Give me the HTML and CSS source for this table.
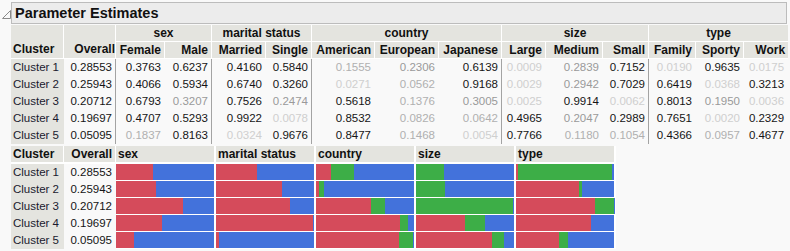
FILE: index.html
```html
<!DOCTYPE html>
<html>
<head>
<meta charset="utf-8">
<link rel="stylesheet" href="styles.css">
</head>
<body>
<div class="report">
  <div class="outline">
    <svg class="disc" width="9" height="9" viewBox="0 0 9 9"><polygon points="8.5,0.5 8.5,8.5 0.5,8.5" fill="none" stroke="#8a8a8a" stroke-width="1"/></svg>
    <div class="title">Parameter Estimates</div>
  </div>
  <div class="content">
    <table class="est">
      <colgroup>
        <col class="w53"><col class="w52"><col class="w49"><col class="w47"><col class="w54"><col class="w46"><col class="w63"><col class="w64"><col class="w63"><col class="w44"><col class="w57"><col class="w46"><col class="w47"><col class="w48"><col class="w44">
      </colgroup>
      <thead>
        <tr class="grp">
          <th rowspan="2" class="hlab">Cluster</th>
          <th rowspan="2" class="hnum">Overall</th>
          <th colspan="2">sex</th>
          <th colspan="2">marital status</th>
          <th colspan="3">country</th>
          <th colspan="3">size</th>
          <th colspan="3" class="last">type</th>
        </tr>
        <tr class="sub">
          <th>Female</th><th>Male</th><th>Married</th><th>Single</th><th>American</th><th>European</th><th>Japanese</th><th>Large</th><th>Medium</th><th>Small</th><th>Family</th><th>Sporty</th><th class="last">Work</th>
        </tr>
      </thead>
      <tbody>
        <tr><td class="lab">Cluster 1</td><td class="end">0.28553</td><td>0.3763</td><td class="end">0.6237</td><td>0.4160</td><td class="end">0.5840</td><td class="v1">0.1555</td><td class="v2">0.2306</td><td class="end">0.6139</td><td class="v0">0.0009</td><td class="v2">0.2839</td><td class="end">0.7152</td><td class="v0">0.0190</td><td>0.9635</td><td class="v0">0.0175</td></tr>
        <tr><td class="lab">Cluster 2</td><td class="end">0.25943</td><td>0.4066</td><td class="end">0.5934</td><td>0.6740</td><td class="end">0.3260</td><td class="v0">0.0271</td><td class="v1">0.0562</td><td class="end">0.9168</td><td class="v0">0.0029</td><td class="v2">0.2942</td><td class="end">0.7029</td><td>0.6419</td><td class="v0">0.0368</td><td>0.3213</td></tr>
        <tr><td class="lab">Cluster 3</td><td class="end">0.20712</td><td>0.6793</td><td class="end v2">0.3207</td><td>0.7526</td><td class="end v2">0.2474</td><td>0.5618</td><td class="v1">0.1376</td><td class="end v2">0.3005</td><td class="v0">0.0025</td><td>0.9914</td><td class="end v0">0.0062</td><td>0.8013</td><td class="v2">0.1950</td><td class="v0">0.0036</td></tr>
        <tr><td class="lab">Cluster 4</td><td class="end">0.19697</td><td>0.4707</td><td class="end">0.5293</td><td>0.9922</td><td class="end v0">0.0078</td><td>0.8532</td><td class="v1">0.0826</td><td class="end v1">0.0642</td><td>0.4965</td><td class="v2">0.2047</td><td class="end">0.2989</td><td>0.7651</td><td class="v0">0.0020</td><td>0.2329</td></tr>
        <tr><td class="lab">Cluster 5</td><td class="end">0.05095</td><td class="v1">0.1837</td><td class="end">0.8163</td><td class="v0">0.0324</td><td class="end">0.9676</td><td>0.8477</td><td class="v1">0.1468</td><td class="end v0">0.0054</td><td>0.7766</td><td class="v1">0.1180</td><td class="end v1">0.1054</td><td>0.4366</td><td class="v1">0.0957</td><td>0.4677</td></tr>
      </tbody>
    </table>

    <table class="bars">
      <colgroup>
        <col class="w53"><col class="w52"><col class="w100"><col class="w100"><col class="w100"><col class="w100"><col class="w100">
      </colgroup>
      <thead>
        <tr>
          <th class="hlab">Cluster</th><th class="hnum">Overall</th><th>sex</th><th>marital status</th><th>country</th><th>size</th><th>type</th>
        </tr>
      </thead>
      <tbody>
        <tr><td class="lab">Cluster 1</td><td class="num">0.28553</td>
          <td class="cell"><div class="bar"><span class="r" style="width:37.63%"></span><span class="b" style="width:62.37%"></span></div></td>
          <td class="cell"><div class="bar"><span class="r" style="width:41.60%"></span><span class="b" style="width:58.40%"></span></div></td>
          <td class="cell"><div class="bar"><span class="r" style="width:15.55%"></span><span class="g" style="width:23.06%"></span><span class="b" style="width:61.39%"></span></div></td>
          <td class="cell"><div class="bar"><span class="r" style="width:0.09%"></span><span class="g" style="width:28.39%"></span><span class="b" style="width:71.52%"></span></div></td>
          <td class="cell"><div class="bar"><span class="r" style="width:1.90%"></span><span class="g" style="width:96.35%"></span><span class="b" style="width:1.75%"></span></div></td>
        </tr>
        <tr><td class="lab">Cluster 2</td><td class="num">0.25943</td>
          <td class="cell"><div class="bar"><span class="r" style="width:40.66%"></span><span class="b" style="width:59.34%"></span></div></td>
          <td class="cell"><div class="bar"><span class="r" style="width:67.40%"></span><span class="b" style="width:32.60%"></span></div></td>
          <td class="cell"><div class="bar"><span class="r" style="width:2.71%"></span><span class="g" style="width:5.62%"></span><span class="b" style="width:91.68%"></span></div></td>
          <td class="cell"><div class="bar"><span class="r" style="width:0.29%"></span><span class="g" style="width:29.42%"></span><span class="b" style="width:70.29%"></span></div></td>
          <td class="cell"><div class="bar"><span class="r" style="width:64.19%"></span><span class="g" style="width:3.68%"></span><span class="b" style="width:32.13%"></span></div></td>
        </tr>
        <tr><td class="lab">Cluster 3</td><td class="num">0.20712</td>
          <td class="cell"><div class="bar"><span class="r" style="width:67.93%"></span><span class="b" style="width:32.07%"></span></div></td>
          <td class="cell"><div class="bar"><span class="r" style="width:75.26%"></span><span class="b" style="width:24.74%"></span></div></td>
          <td class="cell"><div class="bar"><span class="r" style="width:56.18%"></span><span class="g" style="width:13.76%"></span><span class="b" style="width:30.05%"></span></div></td>
          <td class="cell"><div class="bar"><span class="r" style="width:0.25%"></span><span class="g" style="width:99.14%"></span><span class="b" style="width:0.62%"></span></div></td>
          <td class="cell"><div class="bar"><span class="r" style="width:80.13%"></span><span class="g" style="width:19.50%"></span><span class="b" style="width:0.36%"></span></div></td>
        </tr>
        <tr><td class="lab">Cluster 4</td><td class="num">0.19697</td>
          <td class="cell"><div class="bar"><span class="r" style="width:47.07%"></span><span class="b" style="width:52.93%"></span></div></td>
          <td class="cell"><div class="bar"><span class="r" style="width:99.22%"></span><span class="b" style="width:0.78%"></span></div></td>
          <td class="cell"><div class="bar"><span class="r" style="width:85.32%"></span><span class="g" style="width:8.26%"></span><span class="b" style="width:6.42%"></span></div></td>
          <td class="cell"><div class="bar"><span class="r" style="width:49.65%"></span><span class="g" style="width:20.47%"></span><span class="b" style="width:29.89%"></span></div></td>
          <td class="cell"><div class="bar"><span class="r" style="width:76.51%"></span><span class="g" style="width:0.20%"></span><span class="b" style="width:23.29%"></span></div></td>
        </tr>
        <tr><td class="lab">Cluster 5</td><td class="num">0.05095</td>
          <td class="cell"><div class="bar"><span class="r" style="width:18.37%"></span><span class="b" style="width:81.63%"></span></div></td>
          <td class="cell"><div class="bar"><span class="r" style="width:3.24%"></span><span class="b" style="width:96.76%"></span></div></td>
          <td class="cell"><div class="bar"><span class="r" style="width:84.77%"></span><span class="g" style="width:14.68%"></span><span class="b" style="width:0.54%"></span></div></td>
          <td class="cell"><div class="bar"><span class="r" style="width:77.66%"></span><span class="g" style="width:11.80%"></span><span class="b" style="width:10.54%"></span></div></td>
          <td class="cell"><div class="bar"><span class="r" style="width:43.66%"></span><span class="g" style="width:9.57%"></span><span class="b" style="width:46.77%"></span></div></td>
        </tr>
      </tbody>
    </table>
  </div>
</div>
</body>
</html>
```

FILE: styles.css
```css
html, body {
  margin: 0;
  padding: 0;
  background: #f9f9f9;
}
body {
  font-family: "Liberation Sans", Arial, sans-serif;
  color: #151515;
}
.report {
  padding: 2px 0 0 2px;
}
.outline {
  display: flex;
  align-items: flex-start;
}
.disc {
  display: block;
  margin-top: 8px;
}
.title {
  box-sizing: border-box;
  width: 776px;
  height: 22px;
  border: 1px solid #bcbcbc;
  background: #ececec;
  font-weight: bold;
  font-size: 14.5px;
  line-height: 20px;
  padding-left: 3px;
  color: #111;
}
.content {
  margin-left: 9px;
  margin-top: 1px;
}
table {
  border-collapse: separate;
  border-spacing: 0;
  table-layout: fixed;
}
.est { width: 777px; }
.bars { width: 605px; margin-top: 2px; }

.w53 { width: 53px; }
.w52 { width: 52px; }
.w49 { width: 49px; }
.w47 { width: 47px; }
.w54 { width: 54px; }
.w46 { width: 46px; }
.w63 { width: 63px; }
.w64 { width: 64px; }
.w44 { width: 44px; }
.w57 { width: 57px; }
.w48 { width: 48px; }
.w100 { width: 100px; }

th {
  background: #e4e4df;
  font-weight: bold;
  font-size: 12px;
  height: 16px;
  line-height: 16px;
  padding: 0 3px 0 0;
  border-right: 1px solid #fff;
  border-bottom: 1px solid #fff;
  white-space: nowrap;
  overflow: hidden;
  color: #111;
}
.est .grp th { text-align: center; padding: 0; }
.est .sub th { text-align: right; }
.est th.hlab { text-align: left; vertical-align: bottom; padding-left: 2px; padding-bottom: 1px; }
.est th.hnum { text-align: right; vertical-align: bottom; padding-bottom: 1px; }
.est th.last { border-right: 0; }

td {
  font-size: 11.5px;
  height: 17px;
  line-height: 17px;
  padding: 0 3px 0 0;
  text-align: right;
  white-space: nowrap;
  border-right: 1px solid transparent;
}
td.lab {
  background: #e4e4df;
  text-align: left;
  padding-left: 2px;
  color: #1a1a2e;
}
td.end { border-right: 1px solid #a3a3a3; }
td.v0 { color: #cfcfcf; }
td.v1 { color: #b0b0b0; }
td.v2 { color: #9a9a9a; }

.bars th {
  text-align: left;
  padding-left: 2px;
  border-bottom: 2px solid #fff;
}
.bars th.hnum { text-align: right; padding-left: 0; }
.bars th:nth-child(n+3) { border-right: 2px solid #fff; padding-left: 2px; }
.bars td { height: 16px; line-height: 16px; border-bottom: 1px solid transparent; }
.bars td.lab { border-bottom-color: #e4e4df; }
.bars td.cell {
  padding: 0;
  border-right: 2px solid #fff;
  border-bottom: 1px solid #fff;
  background: #fff;
}
.bar {
  display: flex;
  height: 16px;
}
.bar span { display: block; height: 16px; }
.r { background: #d54b5b; }
.g { background: #3dae47; }
.b { background: #4372db; }
```
